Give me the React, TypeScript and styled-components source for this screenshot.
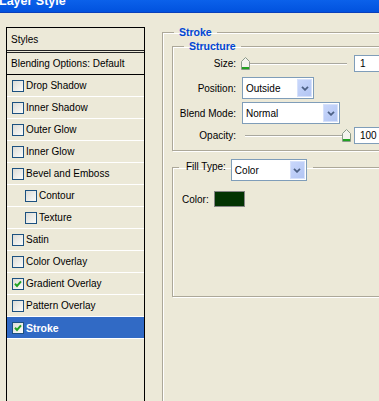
import React from 'react';
import styled, {createGlobalStyle} from 'styled-components';

const GlobalStyle = createGlobalStyle`
    html, body {
        margin: 0;
        padding: 0;
        background: #ece9d8;
        overflow: hidden;
    }

    body {
        font-family: 'Liberation Sans', Arial, sans-serif;
        font-size: 10px;
        color: #000;
    }
`;

interface StyleItem {
    label: string;
    checked: boolean;
    indent?: boolean;
    selected?: boolean;
}

const styleItems: StyleItem[] = [
    {label: 'Drop Shadow', checked: false},
    {label: 'Inner Shadow', checked: false},
    {label: 'Outer Glow', checked: false},
    {label: 'Inner Glow', checked: false},
    {label: 'Bevel and Emboss', checked: false},
    {label: 'Contour', checked: false, indent: true},
    {label: 'Texture', checked: false, indent: true},
    {label: 'Satin', checked: false},
    {label: 'Color Overlay', checked: false},
    {label: 'Gradient Overlay', checked: true},
    {label: 'Pattern Overlay', checked: false},
    {label: 'Stroke', checked: true, selected: true},
];

const CheckMark = () => (
    <svg
        width={8}
        height={8}
        viewBox='0 0 8 8'
    >
        <path
            d='M1 3.8 L3 5.9 L7 1.4'
            fill='none'
            stroke='#21a121'
            strokeWidth={2}
        />
    </svg>
);

const Chevron = () => (
    <svg
        width={8}
        height={5}
        viewBox='0 0 8 5'
    >
        <path
            d='M1 0.8 L4 3.8 L7 0.8'
            fill='none'
            stroke='#4d6185'
            strokeWidth={1.8}
        />
    </svg>
);

const ThumbIcon = () => (
    <svg
        width={9}
        height={13}
        viewBox='0 0 9 13'
    >
        <path
            d='M0.5 12.5 V4.5 L4.5 0.5 L8.5 4.5 V12.5 Z'
            fill='#f4f3ee'
            stroke='#8a9a8a'
        />
        <rect
            x={1}
            y={10}
            width={7}
            height={2}
            fill='#21a121'
        />
    </svg>
);

const Slider = ({value}: {value: number}) => (
    <SliderBox>
        <Track/>
        <Thumb style={{left: `${value * 101}px`}}>
            <ThumbIcon/>
        </Thumb>
    </SliderBox>
);

const Select = ({value, width}: {value: string; width: number}) => (
    <SelectBox $width={width}>
        <SelectValue>{value}</SelectValue>
        <ArrowButton>
            <Chevron/>
        </ArrowButton>
    </SelectBox>
);

const App = () => {
    return (
        <Window>
            <GlobalStyle/>
            <TitleBar>
                <TitleText>{'Layer Style'}</TitleText>
            </TitleBar>
            <Body>
                <StylesList>
                    <ListHeader>{'Styles'}</ListHeader>
                    <BlendingRow>{'Blending Options: Default'}</BlendingRow>
                    {styleItems.map((item) => (
                        <StyleRow
                            key={item.label}
                            $indent={Boolean(item.indent)}
                            $selected={Boolean(item.selected)}
                        >
                            <Checkbox>{item.checked && <CheckMark/>}</Checkbox>
                            <span>{item.label}</span>
                        </StyleRow>
                    ))}
                </StylesList>
                <OuterGroup>
                    <GroupTitle>{'Stroke'}</GroupTitle>
                    <StructureGroup>
                        <SubTitle>{'Structure'}</SubTitle>
                        <FormRow $height={17}>
                            <Label>{'Size:'}</Label>
                            <Slider value={0}/>
                            <NumberBox>{'1'}</NumberBox>
                        </FormRow>
                        <FormRow
                            $height={22}
                            $top={5}
                        >
                            <Label>{'Position:'}</Label>
                            <Select
                                value='Outside'
                                width={72}
                            />
                        </FormRow>
                        <FormRow
                            $height={22}
                            $top={3}
                        >
                            <Label>{'Blend Mode:'}</Label>
                            <Select
                                value='Normal'
                                width={98}
                            />
                        </FormRow>
                        <FormRow
                            $height={17}
                            $top={3}
                        >
                            <Label>{'Opacity:'}</Label>
                            <Slider value={1}/>
                            <NumberBox>{'100'}</NumberBox>
                        </FormRow>
                    </StructureGroup>
                    <FillGroup>
                        <FillLegend>
                            <FillLabel>{'Fill Type:'}</FillLabel>
                            <Select
                                value='Color'
                                width={76}
                            />
                        </FillLegend>
                        <ColorRow>
                            <span>{'Color:'}</span>
                            <Swatch/>
                        </ColorRow>
                    </FillGroup>
                </OuterGroup>
            </Body>
        </Window>
    );
};

const Window = styled.div`
    display: flex;
    flex-direction: column;
    width: 379px;
    height: 401px;
    overflow: hidden;
    background: #ece9d8;
`;

const TitleBar = styled.div`
    flex: none;
    height: 12px;
    overflow: hidden;
    background: linear-gradient(#0b61ea, #0152de);
    border-bottom: 1px solid #0a3fba;
`;

const TitleText = styled.div`
    margin-top: -5px;
    margin-left: -1px;
    font: bold 12.5px/13px 'Liberation Sans', Arial, sans-serif;
    color: #fff;
    white-space: nowrap;
`;

const Body = styled.div`
    display: flex;
    align-items: flex-start;
    padding-left: 6px;
`;

const StylesList = styled.div`
    flex: none;
    width: 139px;
    height: 400px;
    margin-top: 14px;
    box-sizing: border-box;
    border: 1px solid #000;
`;

const ListHeader = styled.div`
    display: flex;
    align-items: center;
    height: 22px;
    padding-left: 4px;
    border-bottom: 3px double #222;
`;

const BlendingRow = styled.div`
    display: flex;
    align-items: center;
    height: 21px;
    padding-left: 4px;
    border-bottom: 1px solid #000;
    white-space: nowrap;
`;

const StyleRow = styled.div<{$indent: boolean; $selected: boolean}>`
    display: flex;
    align-items: center;
    height: 21px;
    padding-left: ${(p) => (p.$indent ? 18 : 5)}px;
    border-bottom: 1px solid #fff;
    background: ${(p) => (p.$selected ? '#316ac5' : 'transparent')};
    color: ${(p) => (p.$selected ? '#fff' : '#000')};
    font-weight: ${(p) => (p.$selected ? 'bold' : 'normal')};
    font-size: ${(p) => (p.$selected ? '10.5px' : '10px')};
    white-space: nowrap;
`;

const Checkbox = styled.div`
    display: flex;
    align-items: center;
    justify-content: center;
    flex: none;
    width: 12px;
    height: 12px;
    margin-right: 2px;
    box-sizing: border-box;
    border: 1px solid #1c5180;
    background: linear-gradient(135deg, #dcdcd7, #fbfbf9);
`;

const OuterGroup = styled.fieldset`
    flex: none;
    width: 240px;
    height: 400px;
    min-width: 0;
    margin: 13px 0 0 17px;
    padding: 1px 0 0 9px;
    box-sizing: border-box;
    border: 1px solid #aca899;
    box-shadow: inset 1px 1px 0 #fff;
`;

const GroupTitle = styled.legend`
    margin-left: 2px;
    padding: 0 5px;
    font: bold 10.5px/13px 'Liberation Sans', Arial, sans-serif;
    color: #0046d5;
`;

const SubTitle = styled(GroupTitle)`
    margin-left: 11px;
`;

const StructureGroup = styled.fieldset`
    width: 230px;
    min-width: 0;
    margin: 0;
    padding: 2px 0 6px 0;
    box-sizing: border-box;
    border: 1px solid #aca899;
    box-shadow: inset 1px 1px 0 #fff, 1px 1px 0 #fff;
`;

const FormRow = styled.div<{$height: number; $top?: number}>`
    display: flex;
    align-items: center;
    height: ${(p) => p.$height}px;
    margin-top: ${(p) => p.$top ?? 0}px;
`;

const Label = styled.div`
    flex: none;
    width: 63px;
    margin-right: 5px;
    text-align: right;
    white-space: nowrap;
`;

const SliderBox = styled.div`
    position: relative;
    display: flex;
    align-items: center;
    flex: none;
    width: 110px;
    height: 13px;
`;

const Track = styled.div`
    flex: 1;
    height: 1px;
    margin: 1px 4px 0;
    background: #a9a89f;
    border-bottom: 1px solid #fff;
`;

const Thumb = styled.div`
    position: absolute;
    top: 0;
    display: flex;
`;

const NumberBox = styled.div`
    display: flex;
    align-items: center;
    flex: none;
    width: 40px;
    height: 17px;
    margin-left: 3px;
    padding-left: 5px;
    box-sizing: border-box;
    border: 1px solid #7f9db9;
    background: #fff;
`;

const SelectBox = styled.div<{$width: number}>`
    display: flex;
    align-items: center;
    flex: none;
    width: ${(p) => p.$width}px;
    height: 22px;
    margin-left: 1px;
    padding: 0 1px 0 3px;
    box-sizing: border-box;
    border: 1px solid #7f9db9;
    background: #fff;
`;

const SelectValue = styled.span`
    flex: 1;
    white-space: nowrap;
`;

const ArrowButton = styled.div`
    display: flex;
    align-items: center;
    justify-content: center;
    flex: none;
    width: 15px;
    height: 18px;
    box-sizing: border-box;
    border: 1px solid #d6e1fb;
    background: linear-gradient(135deg, #c9d7fb, #b2c5f3);
`;

const FillGroup = styled(StructureGroup)`
    margin-top: 8px;
    padding: 16px 0 89px 0;
`;

const FillLegend = styled.legend`
    display: flex;
    align-items: flex-start;
    height: 16px;
    margin-left: 6px;
    padding: 0 6px 0 7px;
`;

const FillLabel = styled.span`
    margin-top: 1px;
    margin-right: 4px;
    line-height: 13px;
    white-space: nowrap;
`;

const ColorRow = styled.div`
    display: flex;
    align-items: center;
    gap: 5px;
    height: 16px;
    padding-left: 9px;
`;

const Swatch = styled.div`
    width: 31px;
    height: 16px;
    box-sizing: border-box;
    border: 1px solid #858585;
    background: #023302;
`;

export default App;
